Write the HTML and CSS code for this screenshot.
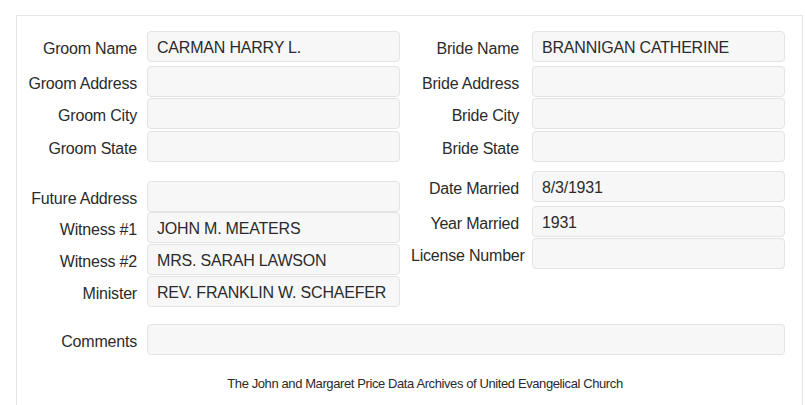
FILE: index.html
```html
<!DOCTYPE html>
<html lang="en">
<head>
  <meta charset="UTF-8">
  <meta name="viewport" content="width=device-width, initial-scale=1.0">
  <title>Marriage Record | United Evangelical Church</title>
  <link rel="stylesheet" href="styles.css">
</head>
<body>
  <div class="record-panel">
    <!-- Groom / Bride -->
    <div class="record-grid">
      <div class="record-col left">
        <div class="field sp-0"><label>Groom Name</label><input type="text" value="CARMAN HARRY L." readonly></div>
        <div class="field sp-4"><label>Groom Address</label><input type="text" readonly></div>
        <div class="field"><label>Groom City</label><input type="text" readonly></div>
        <div class="field sp-2"><label>Groom State</label><input type="text" readonly></div>
      </div>
      <div class="record-col right">
        <div class="field sp-0"><label>Bride Name</label><input type="text" value="BRANNIGAN CATHERINE" readonly></div>
        <div class="field sp-4"><label>Bride Address</label><input type="text" readonly></div>
        <div class="field"><label>Bride City</label><input type="text" readonly></div>
        <div class="field sp-2"><label>Bride State</label><input type="text" readonly></div>
      </div>
    </div>

    <!-- Wedding details -->
    <div class="record-grid">
      <div class="record-col left">
        <div class="field sp-19"><label>Future Address</label><input type="text" readonly></div>
        <div class="field sp-0"><label>Witness #1</label><input type="text" value="JOHN M. MEATERS" readonly></div>
        <div class="field"><label>Witness #2</label><input type="text" value="MRS. SARAH LAWSON" readonly></div>
        <div class="field"><label>Minister</label><input type="text" value="REV. FRANKLIN W. SCHAEFER" readonly></div>
      </div>
      <div class="record-col right">
        <div class="field sp-9"><label>Date Married</label><input type="text" value="8/3/1931" readonly></div>
        <div class="field sp-4"><label>Year Married</label><input type="text" value="1931" readonly></div>
        <div class="field"><label>License Number</label><input type="text" readonly></div>
      </div>
    </div>

    <div class="field comments"><label>Comments</label><input type="text" readonly></div>

    <p class="footer-note">The John and Margaret Price Data Archives of United Evangelical Church</p>
  </div>
</body>
</html>
```

FILE: styles.css
```css
body {
  margin: 0;
  background: #fff;
  font-family: "Liberation Sans", Arial, sans-serif;
  color: #2b2b2b;
}
.record-panel {
  margin: 15px 2px 0 16px;
  border: 1px solid #e5e5e5;
  padding: 15px 17px 40px 0;
}
.record-grid {
  display: flex;
  gap: 11px;
  align-items: flex-start;
}
.record-col {
  display: flex;
  flex-direction: column;
}
.field {
  display: grid;
  align-items: center;
  margin-top: 1px;
}
.left .field, .comments {
  grid-template-columns: 120px 253px;
  column-gap: 10px;
}
.right .field {
  grid-template-columns: 108px 253px;
  column-gap: 13px;
}
.field label {
  font-size: 16px;
  letter-spacing: -0.2px;
  text-align: right;
  white-space: nowrap;
  padding-top: 5px;
}
.field input {
  box-sizing: border-box;
  height: 31px;
  width: 100%;
  margin: 0;
  padding: 3px 9px 0;
  border: 1px solid #e3e3e3;
  border-radius: 4px;
  background: #f7f7f7;
  font-family: "Liberation Sans", Arial, sans-serif;
  font-size: 16px;
  letter-spacing: -0.2px;
  color: #2b2b2b;
  outline: none;
}
.sp-0 { margin-top: 0; }
.sp-2 { margin-top: 2px; }
.sp-4 { margin-top: 4px; }
.sp-9 { margin-top: 9px; }
.sp-19 { margin-top: 19px; }
.comments {
  margin-top: 17px;
  grid-template-columns: 120px 1fr;
}
.footer-note {
  margin: 21px 0 0;
  padding-left: 48px;
  text-align: center;
  font-size: 13px;
  letter-spacing: -0.4px;
}
```
